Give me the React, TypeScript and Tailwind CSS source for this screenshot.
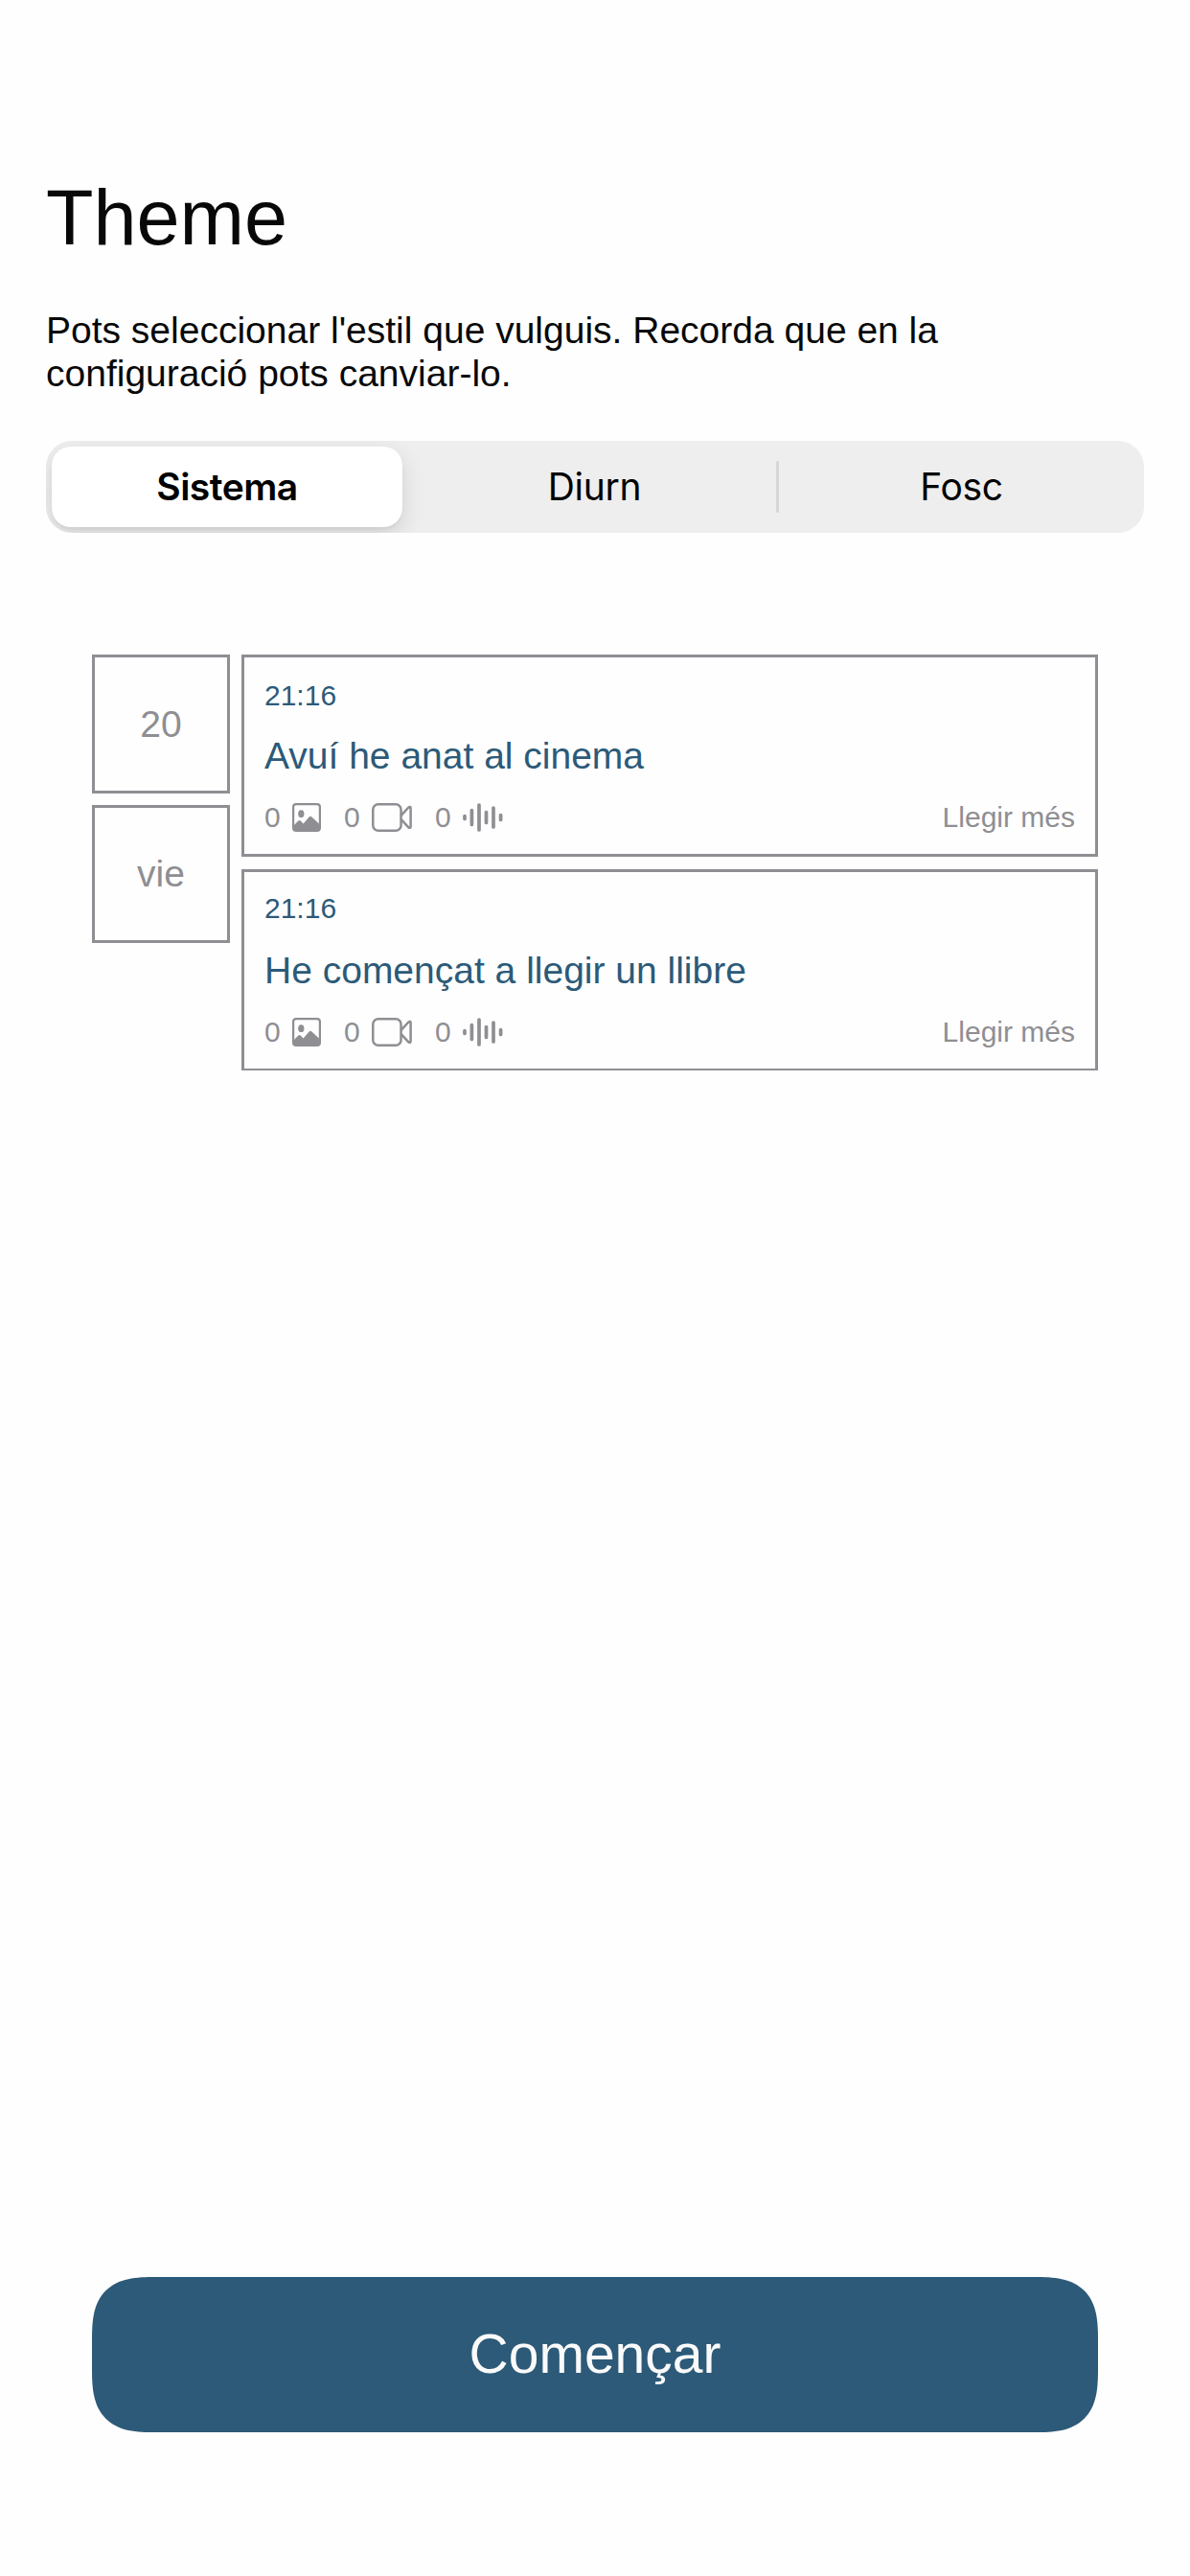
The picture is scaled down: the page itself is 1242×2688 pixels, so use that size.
import React from "react";

const ImageIcon = () => (
  <svg width="30" height="30" viewBox="0 0 30 30" fill="none">
    <rect x="1.1" y="1.1" width="27.8" height="27.8" rx="3" stroke="#8e8e93" strokeWidth="2.2" />
    <ellipse cx="9.3" cy="11.2" rx="3.1" ry="3.9" fill="#8e8e93" />
    <path d="M1 24L6.3 18.4Q7.5 17.4 8.7 18.4L11.6 21.4L17.6 14.4Q19 13 20.4 14.4L29 22.5V27Q29 29 27 29H3Q1 29 1 27Z" fill="#8e8e93" />
  </svg>
);

const VideoIcon = () => (
  <svg width="42" height="30" viewBox="0 0 42 30" fill="none" stroke="#8e8e93" strokeWidth="2.5" strokeLinejoin="round">
    <rect x="1.25" y="1.25" width="29.3" height="27.5" rx="5.5" />
    <path d="M30.5 13.2L38.4 4.5Q40.6 3.2 40.6 5.2V24.4Q40.6 26.6 38.4 25.3L30.5 16.8" />
  </svg>
);

const WaveIcon = () => (
  <svg width="42" height="30" viewBox="0 0 42 30" fill="none" stroke="#8e8e93" strokeWidth="3.7" strokeLinecap="round">
    <path d="M2 13.5V16.5M9.4 7.5V22.5M17 2V28M24.5 9.5V20.5M32 5V25M39.6 12.5V17.5" />
  </svg>
);

function Entry({ title, className }: { title: string; className: string }) {
  return (
    <article className={`flex flex-col border-[3px] border-[#8e8e93] px-[21px] ${className}`}>
      <time className="text-[30px] leading-9 text-[#2c5a78]">21:16</time>
      <h2 className="mt-auto text-[39px] leading-[48px] text-[#2c5a78]">{title}</h2>
      <div className="mt-[25px] flex h-[30px] items-center text-[30px] leading-[30px] text-[#8e8e93]">
        <span className="w-[29px]">0</span>
        <ImageIcon />
        <span className="ml-6 w-[29px]">0</span>
        <VideoIcon />
        <span className="ml-6 w-[29px]">0</span>
        <WaveIcon />
        <span className="ml-auto">Llegir més</span>
      </div>
    </article>
  );
}

export default function App() {
  return (
    <main className="flex h-[2688px] w-[1242px] flex-col bg-[#fefefe] px-12 pt-[179px] font-['Liberation_Sans',Arial,sans-serif] text-[#080808]">
      <h1 className="text-[81px] leading-[96px]">Theme</h1>
      <p className="mt-[47px] text-[39px] leading-[45px]">
        Pots seleccionar l'estil que vulguis. Recorda que en la
        <br />
        configuració pots canviar-lo.
      </p>

      <div className="mt-12 flex h-24 items-center overflow-hidden rounded-[27px] bg-[#eeeeee] p-1.5 font-['Inter',sans-serif] text-[39px] text-black">
        <button className="h-[84px] w-[366px] rounded-[20px] bg-white font-semibold tracking-[-0.5px] shadow-[0_9px_24px_rgba(0,0,0,0.12),0_3px_3px_rgba(0,0,0,0.04)]">
          Sistema
        </button>
        <button className="ml-[9px] h-[84px] w-[381px] pl-0.5 font-normal tracking-[-0.3px]">Diurn</button>
        <div className="h-[54px] w-[3px] rounded-full bg-[#d6d6d7]" />
        <button className="h-[84px] flex-1 pl-1.5 font-normal tracking-[-0.3px]">Fosc</button>
      </div>

      <section className="mx-12 mt-[127px] flex gap-3 text-[#8e8e93]">
        <div className="flex w-36 flex-col gap-3 text-[39px]">
          <div className="flex h-[145px] items-center justify-center border-[3px] border-[#8e8e93] pt-0.5">20</div>
          <div className="flex h-36 items-center justify-center border-[3px] border-[#8e8e93]">vie</div>
        </div>
        <div className="flex flex-1 flex-col gap-[13px]">
          <Entry title="Avuí he anat al cinema" className="h-[211px] pt-[22px] pb-[23px]" />
          <Entry title="He començat a llegir un llibre" className="h-[210px] border-b-2 pt-5 pb-[23px]" />
        </div>
      </section>

      <button className="mx-12 mt-auto mb-[150px] h-[162px] rounded-[54px] bg-[#2c5a78] text-[57px] text-[#fafafa] supports-[corner-shape:squircle]:rounded-[66px] supports-[corner-shape:squircle]:[corner-shape:superellipse(1.5)]">
        Començar
      </button>
    </main>
  );
}
